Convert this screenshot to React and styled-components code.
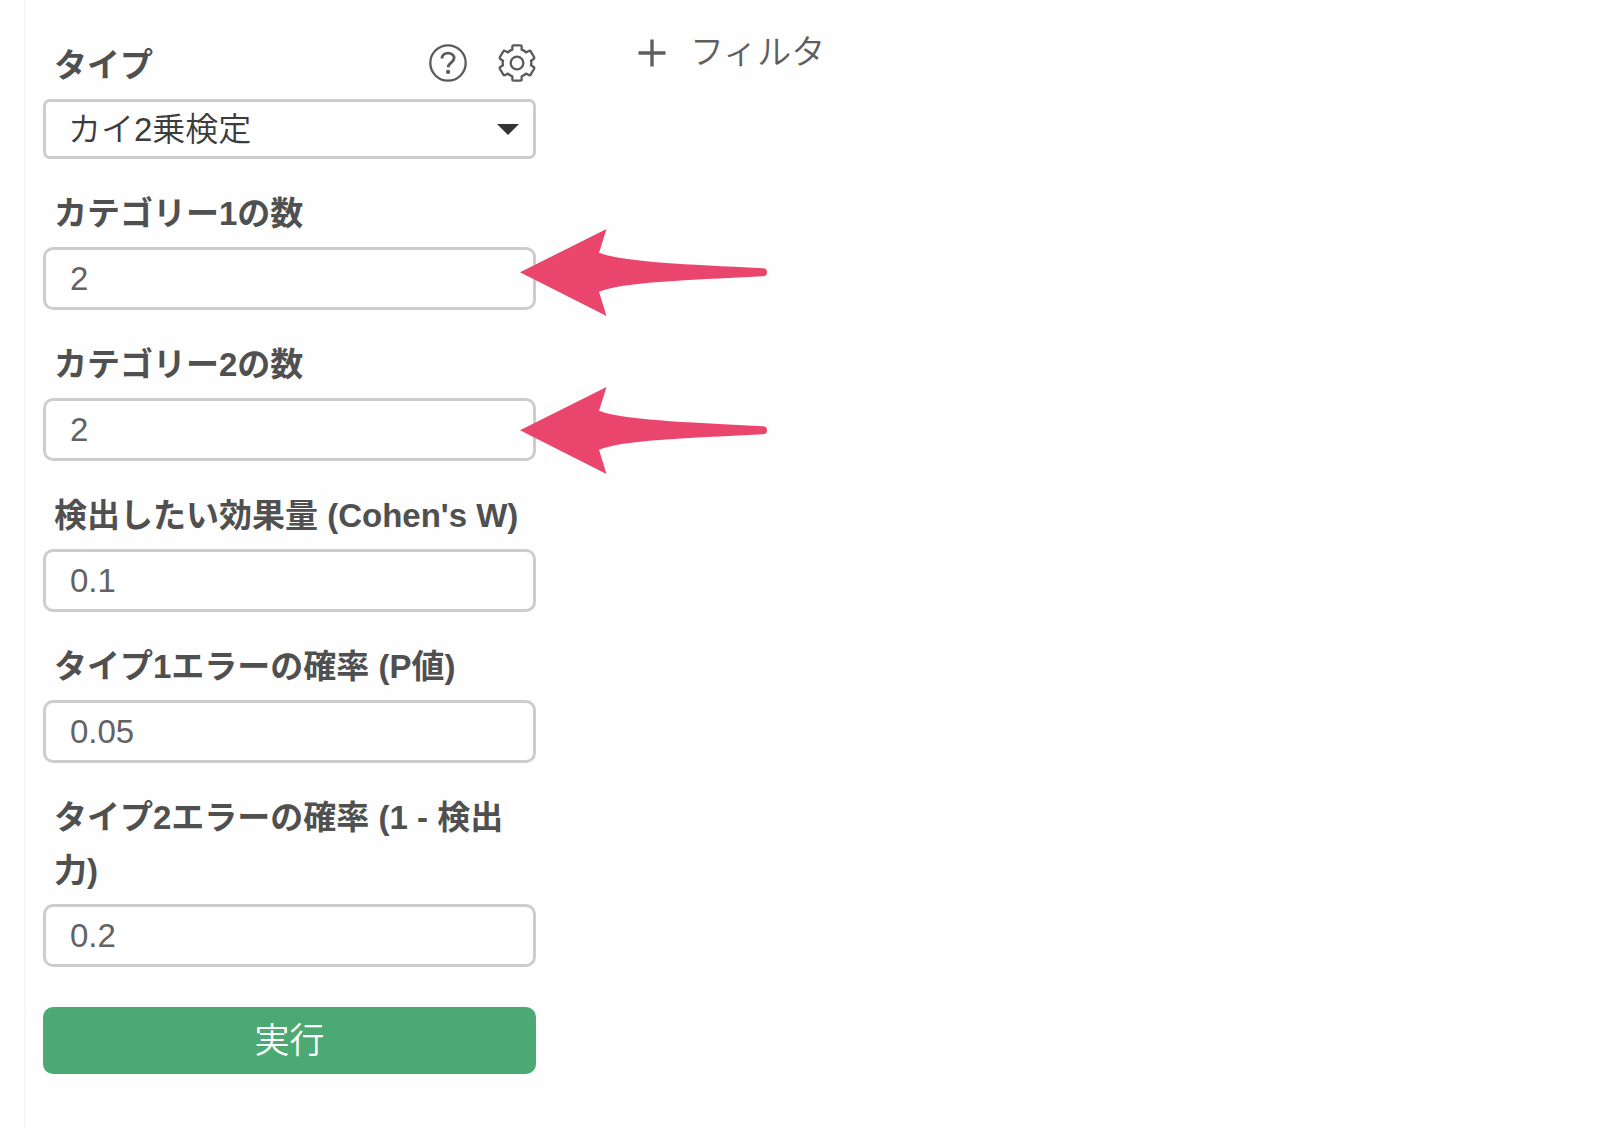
import React, { useState } from "react";
import styled, { createGlobalStyle } from "styled-components";

const GlobalStyle = createGlobalStyle`
  * {
    box-sizing: border-box;
  }

  body {
    margin: 0;
    background: #fefefe;
    color: #505050;
    font-family: "Liberation Sans", "Noto Sans CJK JP", sans-serif;
    font-size: 33px;
  }
`;

const Page = styled.div`
  position: relative;
  display: flex;
  min-height: 100vh;
  padding-left: 24px;
`;

const Sidebar = styled.form`
  display: flex;
  flex: 0 0 512px;
  flex-direction: column;
  gap: 28px;
  padding: 39px 0 50px 17px;
  border-left: 2px solid #f8f8f8;
`;

const Field = styled.div`
  display: flex;
  flex-direction: column;
`;

const FieldHeader = styled.div`
  display: flex;
  justify-content: space-between;
  padding: 0 0 7px 11px;
`;

const Label = styled.label`
  font-weight: bold;
  line-height: 53px;
`;

const Tools = styled.div`
  display: flex;
  gap: 31px;
  padding-top: 5px;
`;

const IconButton = styled.button`
  display: flex;
  padding: 0;
  border: 0;
  background: none;
  color: #5a5a5a;
  cursor: pointer;

  svg {
    width: 38px;
    height: 38px;
  }
`;

const TextInput = styled.input`
  width: 100%;
  height: 63px;
  padding: 0 24px;
  border: 3px solid #cdcdcd;
  border-radius: 10px;
  background: #fff;
  color: #636363;
  font: inherit;
`;

const SelectBox = styled.div`
  position: relative;
`;

const Select = styled.select`
  display: block;
  width: 100%;
  height: 60px;
  padding: 0 60px 0 22px;
  border: 3px solid #cdcdcd;
  border-radius: 7px;
  appearance: none;
  background: #fff;
  color: #3c3c3c;
  font: inherit;
  font-weight: 350;
`;

const Caret = styled.svg`
  position: absolute;
  top: 25px;
  right: 17px;
  width: 22px;
  height: 11px;
  fill: #333;
  pointer-events: none;
`;

const RunButton = styled.button`
  height: 67px;
  margin-top: 12px;
  padding: 0 0 6px;
  border: 0;
  border-radius: 10px;
  background: #4ca973;
  color: #fff;
  font: inherit;
  font-size: 35px;
  font-weight: 350;
  cursor: pointer;
`;

const Main = styled.main`
  flex: 1;
  padding: 26px 0 0 102px;
`;

const FilterButton = styled.button`
  display: flex;
  align-items: center;
  gap: 24px;
  padding: 0;
  border: 0;
  background: none;
  color: #5f5f5f;
  font: inherit;
  font-size: 34px;
  font-weight: 350;
  line-height: 53px;
  cursor: pointer;

  svg {
    width: 28px;
    height: 28px;
  }
`;

// hand-drawn pointers that float over the form
const Pointers = styled.div`
  position: absolute;
  top: 229px;
  left: 520px;
  display: flex;
  flex-direction: column;
  gap: 71px;
  pointer-events: none;

  svg {
    display: block;
    width: 247px;
    height: 87px;
    fill: #ea456c;
  }
`;

const HelpIcon = () => (
  <svg viewBox="0 0 38 38" fill="none" stroke="currentColor" strokeWidth="2.3">
    <circle cx="19" cy="19" r="17.7" />
    <path
      d="M13 14.4c0-3.4 2.6-5.2 6-5.2 3.5 0 6.1 1.9 6.1 4.9 0 4.6-5.9 4.3-5.9 9.2"
      strokeWidth="2.8"
    />
    <circle cx="19.1" cy="27.9" r="2.1" fill="currentColor" stroke="none" />
  </svg>
);

const GearIcon = () => (
  <svg viewBox="-57 -57 114 114" fill="none" stroke="currentColor">
    <path
      d="M-10 -53H10Q14 -53 14 -49V-40Q21 -38 27 -32L36 -36Q39 -38 41 -35L51 -18Q53 -14 50 -12L42 -7Q44 0 42 7L50 12Q53 14 51 18L41 35Q39 38 36 36L27 32Q21 38 14 40V49Q14 53 10 53H-10Q-14 53 -14 49V40Q-21 38 -27 32L-36 36Q-39 38 -41 35L-51 18Q-53 14 -50 12L-42 7Q-44 0 -42 -7L-50 -12Q-53 -14 -51 -18L-41 -35Q-39 -38 -36 -36L-27 -32Q-21 -38 -14 -40V-49Q-14 -53 -10 -53Z"
      strokeWidth="7"
      strokeLinejoin="round"
    />
    <circle r="19" strokeWidth="7" />
  </svg>
);

const PlusIcon = () => (
  <svg viewBox="0 0 28 28" stroke="currentColor" strokeWidth="3.4">
    <path d="M14 0.5V27.5M0.5 14H27.5" />
  </svg>
);

const PointerArrow = () => (
  <svg viewBox="0 0 247 87">
    <path d="M0 43.3L86.5 0L79 23.8C104 33 160 35 243 39.3A4 4 0 0 1 243 47.3C160 51.5 104 53 79 62.8L86.5 87Z" />
  </svg>
);

const FIELDS = [
  { id: "category1", label: "カテゴリー1の数", value: "2" },
  { id: "category2", label: "カテゴリー2の数", value: "2" },
  { id: "effectSize", label: "検出したい効果量 (Cohen's W)", value: "0.1" },
  { id: "type1", label: "タイプ1エラーの確率 (P値)", value: "0.05" },
  { id: "type2", label: "タイプ2エラーの確率 (1 - 検出力)", value: "0.2" }
];

const TextField = function({ id, label, value }) {
  const [current, setCurrent] = useState(value);

  return (
    <Field>
      <FieldHeader>
        <Label htmlFor={id}>{label}</Label>
      </FieldHeader>
      <TextInput
        id={id}
        type="text"
        value={current}
        onChange={event => setCurrent(event.target.value)}
      />
    </Field>
  );
};

const App = function() {
  return (
    <>
      <GlobalStyle />
      <Page lang="ja">
        <Sidebar onSubmit={event => event.preventDefault()}>
          <Field>
            <FieldHeader>
              <Label htmlFor="testType">タイプ</Label>
              <Tools>
                <IconButton type="button" aria-label="ヘルプ">
                  <HelpIcon />
                </IconButton>
                <IconButton type="button" aria-label="設定">
                  <GearIcon />
                </IconButton>
              </Tools>
            </FieldHeader>
            <SelectBox>
              <Select id="testType" defaultValue="chisq">
                <option value="chisq">カイ2乗検定</option>
              </Select>
              <Caret viewBox="0 0 22 11">
                <path d="M0 0H22L11 11Z" />
              </Caret>
            </SelectBox>
          </Field>
          {FIELDS.map(field => (
            <TextField key={field.id} {...field} />
          ))}
          <RunButton type="submit">実行</RunButton>
        </Sidebar>
        <Main>
          <FilterButton type="button">
            <PlusIcon />
            フィルタ
          </FilterButton>
        </Main>
        <Pointers>
          <PointerArrow />
          <PointerArrow />
        </Pointers>
      </Page>
    </>
  );
};

export default App;
